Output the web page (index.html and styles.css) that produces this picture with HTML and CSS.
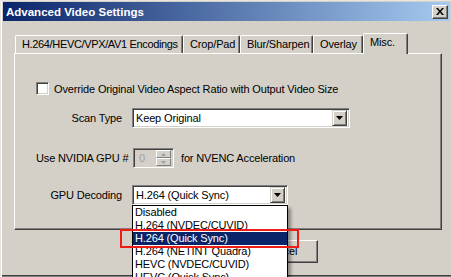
FILE: index.html
```html
<!DOCTYPE html>
<html lang="en">
<head>
  <meta charset="UTF-8">
  <title>Advanced Video Settings</title>
  <link rel="stylesheet" href="styles.css">
</head>
<body>
  <div class="window">
    <div class="titlebar">
      <span class="title">Advanced Video Settings</span>
      <span class="close-btn">
        <svg width="8" height="7" viewBox="0 0 8 7"><path d="M0 0h2l2 2.5 2-2.5h2l-3 3.5 3 3.5h-2l-2-2.5-2 2.5h-2l3-3.5z" fill="#000"/></svg>
      </span>
    </div>

    <div class="tabs">
      <div class="tab tab-enc">H.264/HEVC/VPX/AV1 Encodings</div>
      <div class="tab tab-crop">Crop/Pad</div>
      <div class="tab tab-blur">Blur/Sharpen</div>
      <div class="tab tab-overlay">Overlay</div>
      <div class="tab tab-misc active">Misc.</div>
    </div>

    <div class="panel">
      <div class="row check-row">
        <span class="checkbox"></span>
        <span>Override Original Video Aspect Ratio with Output Video Size</span>
      </div>

      <div class="row field scan-row">
        <label>Scan Type</label>
        <div class="select scan-select">
          <span class="select-value">Keep Original</span>
          <span class="drop-btn"><svg width="7" height="4" viewBox="0 0 7 4"><path d="M0 0h7l-3.5 4z" fill="#000"/></svg></span>
        </div>
      </div>

      <div class="row gpu-row">
        <label>Use NVIDIA GPU #</label>
        <div class="spin">
          <span class="spin-value">0</span>
          <span class="spin-btns">
            <span class="spin-btn"><svg width="5" height="3" viewBox="0 0 5 3"><path d="M2.5 0l2.5 3h-5z" fill="#a0a0a0"/></svg></span>
            <span class="spin-btn"><svg width="5" height="3" viewBox="0 0 5 3"><path d="M0 0h5l-2.5 3z" fill="#a0a0a0"/></svg></span>
          </span>
        </div>
        <span>for NVENC Acceleration</span>
      </div>

      <div class="row field decode-row">
        <label>GPU Decoding</label>
        <div class="select decode-select">
          <span class="select-value">H.264 (Quick Sync)</span>
          <span class="drop-btn"><svg width="7" height="4" viewBox="0 0 7 4"><path d="M0 0h7l-3.5 4z" fill="#000"/></svg></span>
        </div>
      </div>
    </div>

    <div class="buttons">
      <div class="btn">OK</div>
      <div class="btn">Cancel</div>
    </div>

    <ul class="dropdown-list">
      <li>Disabled</li>
      <li>H.264 (NVDEC/CUVID)</li>
      <li class="selected">H.264 (Quick Sync)</li>
      <li>H.264 (NETINT Quadra)</li>
      <li>HEVC (NVDEC/CUVID)</li>
      <li>HEVC (Quick Sync)</li>
    </ul>
    <div class="mark"></div>
  </div>
</body>
</html>
```

FILE: styles.css
```css
:root {
  --face: #d4d0c8;
  --shadow: #808080;
  --dark: #404040;
  --light: #ffffff;
  --select: #0a246a;
}

* {
  box-sizing: border-box;
  margin: 0;
  padding: 0;
}

body {
  font-family: 'Liberation Sans', Arial, sans-serif;
  font-size: 11px;
  letter-spacing: -0.15px;
  color: #000;
  background: var(--face);
}

.window {
  position: relative;
  width: 451px;
  height: 277px;
  overflow: hidden;
  background: var(--face);
  border-top: 1px solid #e8e6e1;
  border-left: 1px solid #e8e6e1;
  box-shadow: inset 1px 0 0 var(--light), inset 0 -1px 0 var(--shadow), inset 0 -2px 0 var(--dark);
}

/* title bar */
.titlebar {
  display: flex;
  align-items: center;
  justify-content: space-between;
  height: 19px;
  margin: 1px 1px 0 2px;
  padding: 0 2px 0 3px;
  background: linear-gradient(90deg, #0a246a, #a6caf0);
}

.title {
  color: #fff;
  font-weight: bold;
  font-size: 11.5px;
  letter-spacing: 0;
}

.close-btn {
  display: flex;
  align-items: center;
  justify-content: center;
  width: 16px;
  height: 14px;
  background: var(--face);
  border: 1px solid;
  border-color: var(--light) var(--dark) var(--dark) var(--light);
  box-shadow: inset -1px -1px 0 var(--shadow);
}

/* tabs */
.tabs {
  display: flex;
  align-items: flex-end;
  height: 20px;
  margin: 12px 0 0 14px;
  position: relative;
  z-index: 2;
}

.tab {
  height: 18px;
  line-height: 16px;
  padding-left: 6px;
  border: 1px solid;
  border-bottom: none;
  border-color: var(--light) var(--dark) transparent var(--light);
  box-shadow: inset -1px 0 0 var(--shadow);
  border-radius: 2px 2px 0 0;
  white-space: nowrap;
  overflow: hidden;
}

.tab-enc { width: 168px; letter-spacing: -0.35px; }
.tab-crop { width: 57px; }
.tab-blur { width: 73px; }
.tab-overlay { width: 50px; }

.tab.active {
  width: 45px;
  height: 21px;
  margin-bottom: -1px;
  line-height: 16px;
  background: var(--face);
}

/* panel */
.panel {
  width: 428px;
  height: 177px;
  margin-left: 13px;
  padding-top: 28px;
  border: 1px solid;
  border-color: var(--light) var(--dark) var(--dark) var(--light);
  box-shadow: inset -1px -1px 0 var(--shadow);
}

.row {
  display: flex;
  align-items: center;
}

.check-row {
  height: 13px;
  gap: 5px;
  padding-left: 21px;
}

.checkbox {
  width: 13px;
  height: 13px;
  background: #fff;
  border: 1px solid;
  border-color: var(--shadow) var(--light) var(--light) var(--shadow);
  box-shadow: inset 1px 1px 0 var(--dark), inset -1px -1px 0 var(--face);
}

.field label {
  width: 107px;
  text-align: right;
  margin-right: 10px;
}

.scan-row { margin-top: 13px; }
.gpu-row { margin-top: 20px; padding-left: 21px; }
.decode-row { margin-top: 17px; }

.select {
  display: flex;
  align-items: center;
  justify-content: space-between;
  height: 20px;
  padding: 0 2px 0 3px;
  background: #fff;
  border: 1px solid;
  border-color: var(--shadow) var(--light) var(--light) var(--shadow);
  box-shadow: inset 1px 1px 0 var(--dark), inset -1px -1px 0 var(--face);
}

.scan-select { width: 218px; }
.decode-select { width: 156px; }

.drop-btn {
  display: flex;
  align-items: center;
  justify-content: center;
  width: 15px;
  height: 16px;
  background: var(--face);
  border: 1px solid;
  border-color: var(--face) var(--dark) var(--dark) var(--face);
  box-shadow: inset 1px 1px 0 var(--light), inset -1px -1px 0 var(--shadow);
}

.gpu-row label {
  width: 97px;
  white-space: nowrap;
}

.spin {
  display: flex;
  align-items: center;
  justify-content: space-between;
  width: 41px;
  height: 20px;
  margin-right: 7px;
  padding: 0 2px 0 5px;
  border: 1px solid;
  border-color: var(--shadow) var(--light) var(--light) var(--shadow);
  box-shadow: inset 1px 1px 0 var(--dark), inset -1px -1px 0 var(--face);
}

.spin-value {
  color: #a0a0a0;
}

.spin-btns {
  display: flex;
  flex-direction: column;
}

.spin-btn {
  display: flex;
  align-items: center;
  justify-content: center;
  width: 15px;
  height: 8px;
  border: 1px solid;
  border-color: var(--light) var(--shadow) var(--shadow) var(--light);
}

/* buttons */
.buttons {
  display: flex;
  justify-content: flex-end;
  gap: 6px;
  margin-top: 10px;
  padding-right: 133px;
}

.btn {
  width: 75px;
  height: 23px;
  line-height: 20px;
  text-align: center;
  border: 1px solid;
  border-color: var(--light) var(--dark) var(--dark) var(--light);
  box-shadow: inset -1px -1px 0 var(--shadow);
}

/* open dropdown list */
.dropdown-list {
  position: absolute;
  left: 131px;
  top: 204px;
  width: 156px;
  height: 90px;
  list-style: none;
  background: #fff;
  border: 1px solid #000;
  box-shadow: 3px 3px 3px rgba(0, 0, 0, 0.35);
  z-index: 5;
}

.dropdown-list li {
  height: 13px;
  line-height: 13px;
  padding-left: 2px;
  white-space: nowrap;
}

.dropdown-list li.selected {
  background: var(--select);
  color: #fff;
}

.mark {
  position: absolute;
  left: 119px;
  top: 228px;
  width: 179px;
  height: 19px;
  border: 2px solid #ee1c17;
  z-index: 6;
}
```
